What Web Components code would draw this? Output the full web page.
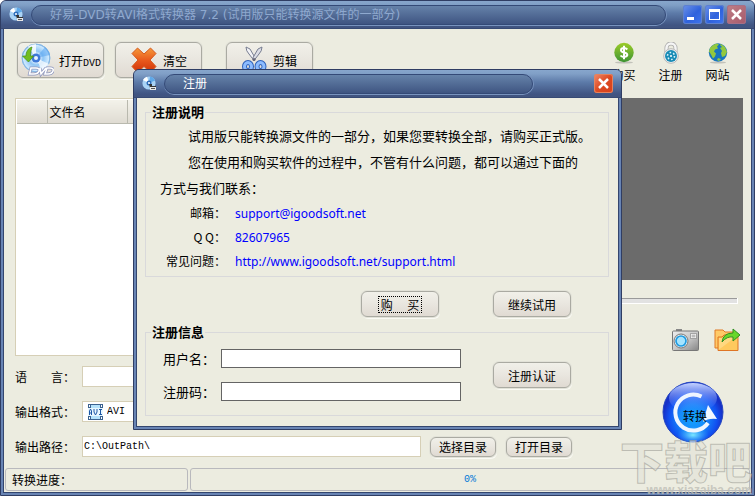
<!DOCTYPE html>
<html lang="zh-CN">
<head>
<meta charset="utf-8">
<title>好易-DVD转AVI格式转换器 7.2</title>
<style>
    body {
        margin: 0;
        background: #fff;
        color: #000;
        font-family: "Noto Sans CJK SC", sans-serif;
        font-size: 12px;
    }
</style>
</head>
<body>
<dvd-converter></dvd-converter>

<script>
const ICONS = {
    disc: `<svg width="16" height="16" viewBox="0 0 16 16">
        <circle cx="7" cy="7" r="6.6" fill="#a9d3f5"/>
        <path d="M7 7L1 4A6.6 6.6 0 0 1 5 .8z" fill="#fff"/><path d="M7 7l6.2-2.5A6.6 6.6 0 0 0 8 .5z" fill="#5fa8e8"/>
        <circle cx="7" cy="7" r="2.5" fill="#2c6cb8"/><circle cx="7" cy="7" r="1.1" fill="#eef6ff"/>
        <path d="M7 8h3v2h4v2H8z" fill="#333"/><path d="M8 11h6v3H8z" fill="#e8e8e8"/><path d="M9 12h4v1H9z" fill="#555"/>
    </svg>`,
    dvd: `<svg width="34" height="34" viewBox="0 0 34 34">
        <defs><radialGradient id="d"><stop offset=".2" stop-color="#fff"/><stop offset=".5" stop-color="#8fc5f5"/><stop offset=".9" stop-color="#cde9ff"/><stop offset="1" stop-color="#6ba7e0"/></radialGradient></defs>
        <circle cx="16" cy="15" r="14" fill="url(#d)" stroke="#85b7e4"/>
        <path d="M16 15L8 3.5A14 14 0 0 1 16 1z" fill="#fff" opacity=".8"/><path d="M16 15l13 6a14 14 0 0 1-7 7z" fill="#fff" opacity=".7"/>
        <path d="M16 15L25 4a14 14 0 0 1 5 8z" fill="#4f9ff0" opacity=".5"/>
        <circle cx="16" cy="15" r="4.5" fill="#3d78d8"/><circle cx="16" cy="15" r="2" fill="#e9f4ff"/>
        <path d="M12 4C8 5 6 9 6 13H2.500l6 6 5-6h-3c0-4 1-7 1.500-9z" fill="#72bd20" stroke="#448c13" stroke-width=".7"/>
        <g fill="none" stroke="#8c95bd" stroke-width="3"><path d="M11 25h5q4 0 3 3-1 3-5 3h-4.500zM20 25l1 6 5-6M27 25h3q4 0 3 3-1 3-5 3h-3z"/></g>
        <g fill="none" stroke="#fff" stroke-width="1.600"><path d="M11 25h5q4 0 3 3-1 3-5 3h-4.500zM20 25l1 6 5-6M27 25h3q4 0 3 3-1 3-5 3h-3z"/></g>
    </svg>`,
    clear: `<svg width="28" height="28" viewBox="0 0 28 28">
        <defs><linearGradient id="c" x2="0" y2="1"><stop stop-color="#f59a3a"/><stop offset=".5" stop-color="#e9591c"/><stop offset="1" stop-color="#cf3208"/></linearGradient></defs>
        <path d="M7.500 2l6.500 6 6.500-6L26 7.500 20 14l6 6.500-5.500 6L14 20.500 7.500 26.500 2 20.500 8 14 2 7.500z" fill="url(#c)" stroke="#d5581d" stroke-linejoin="round"/>
    </svg>`,
    cut: `<svg width="26" height="28" viewBox="0 0 26 28">
        <path d="M4 1q0 4 3 7l5 6.500 1.500-2L8 3z" fill="#f2f2f6" stroke="#777d90"/><path d="M20 1q0 4-3 7l-5 6.500-1.500-2L16 3z" fill="#dcdde6" stroke="#777d90"/>
        <circle cx="12" cy="13.500" r="1.500" fill="#667"/>
        <g fill="none"><g stroke="#2f62ba" stroke-width="5"><ellipse cx="6" cy="20.500" rx="3.500" ry="4"/><ellipse cx="18.500" cy="20.500" rx="3.500" ry="4"/></g><g stroke="#8dbcff" stroke-width="3"><ellipse cx="6" cy="20.500" rx="3.500" ry="4"/><ellipse cx="18.500" cy="20.500" rx="3.500" ry="4"/></g></g>
    </svg>`,
    buy: `<svg width="22" height="22" viewBox="0 0 22 22">
        <defs><linearGradient id="b" x2="0" y2="1"><stop stop-color="#9ccc28"/><stop offset="1" stop-color="#3d9434"/></linearGradient></defs>
        <ellipse cx="11" cy="20.500" rx="9" ry="1" fill="#c2c2ba"/><circle cx="11" cy="10.500" r="9.700" fill="url(#b)"/>
        <path d="M14.300 7.500Q13 6 11 6 8 6 8 8.200c0 3 6.300 1.400 6.300 4.600 0 2.200-5 3-6.800.7M11 3.800v13.500" fill="none" stroke="#fff" stroke-width="2"/>
    </svg>`,
    lock: `<svg width="22" height="22" viewBox="0 0 22 22">
        <path d="M6.500 12V6a4.500 4.500 0 0 1 9 0v6" fill="none" stroke="#aaa" stroke-width="4"/><path d="M6.500 12V6a4.500 4.500 0 0 1 9 0v6" fill="none" stroke="#f5f5f5" stroke-width="2.500"/>
        <circle cx="11" cy="14" r="7.300" fill="#f2f2f2" stroke="#b9b9b9"/><circle cx="11" cy="14" r="6" fill="#188bb5"/>
        <circle cx="11" cy="14" r="3.500" fill="none" stroke="#d6f2fb" stroke-width="1.600" stroke-dasharray="1.600 2.065"/><circle cx="11" cy="14" r="1" fill="#fff"/>
    </svg>`,
    web: `<svg width="22" height="22" viewBox="0 0 22 22">
        <ellipse cx="11" cy="20.500" rx="8" ry="1" fill="#c2c2ba"/><circle cx="11" cy="10.500" r="9.200" fill="#1876bf"/>
        <path d="M3 6q3-4 7-4.500l2 1-2 2 1 2-3 1-1 2 2 2-1 3-2 2-2-4-2-3zM14 2l4 3 2 5-2 4-3 1-1-4 1-2-2-3 2-1-2-2zM11 16l3 1-2 2-2-1z" fill="#92c93e"/>
    </svg>`,
    camera: `<svg width="28" height="24" viewBox="0 0 28 24">
        <defs><linearGradient id="k" x2="1" y2="1"><stop stop-color="#eee"/><stop offset=".5" stop-color="#c9c9c9"/><stop offset="1" stop-color="#858585"/></linearGradient></defs>
        <path d="M4 1h6v3H4z" fill="#888"/><rect x=".5" y="3" width="26" height="19.500" rx="1" fill="url(#k)" stroke="#777"/>
        <rect x="19" y="6" width="5" height="4" fill="#bbb" stroke="#fff"/><path d="M18.500 5.500h6v5h-6z" fill="none" stroke="#777" stroke-width=".6"/>
        <circle cx="9" cy="13" r="7" fill="#f4f4f4" stroke="#777"/><circle cx="9" cy="13" r="5" fill="#a5e4ff" stroke="#209be0" stroke-width="1.700"/>
    </svg>`,
    folder: `<svg width="28" height="24" viewBox="0 0 28 24">
        <path d="M1 20V2h8l2 2h9v16z" fill="#ffca68" stroke="#e07b26"/><path d="M4 22.500V9h4l2-2h14v15.500z" fill="#ffc95e" stroke="#df7524"/>
        <path d="M5 21.500V10h4l2-2h12z" fill="#ffe29a" opacity=".6"/>
        <path d="M8 14q1-9 11-9V1l7 6-7 6V9q-6-1-11 5z" fill="#68d72a" stroke="#2f8f21" stroke-linejoin="round"/>
    </svg>`,
    avi: `<svg width="15" height="16" viewBox="0 0 15 16">
        <path d="M0 0h15v16H0z" fill="#3b6290"/><path d="M3 1h9v14H3z" fill="#b5e2fb"/>
        <path d="M1 1h1v2H1zM13 1h1v2h-1zM1 13h1v2H1zM13 13h1v2h-1z" fill="#fff"/><path d="M0 4h15v8H0z" fill="#e8f7ff"/>
        <path d="M1.500 11V7l1-2 1 2v4M1.500 9h2M6 5v3l1.500 3L9 8V5M11 5.500h3M12.500 5.500v5M11 10.500h3" fill="none" stroke="#1d57a6"/>
    </svg>`,
    convert: `<svg width="62" height="62" viewBox="0 0 62 62">
        <defs><radialGradient id="o" cy=".6"><stop stop-color="#12a4ff"/><stop offset=".45" stop-color="#1689fa"/><stop offset=".8" stop-color="#1150f0"/><stop offset="1" stop-color="#1630c8"/></radialGradient>
        <linearGradient id="g" x2="0" y2="1"><stop stop-color="#c3d2ff"/><stop offset="1" stop-color="#4274ff" stop-opacity="0"/></linearGradient>
        <radialGradient id="h"><stop stop-color="#7ce8ff"/><stop offset="1" stop-color="#36a9ff" stop-opacity="0"/></radialGradient></defs>
        <circle cx="31" cy="31" r="30" fill="url(#o)" stroke="#2445bf"/><ellipse cx="31" cy="17" rx="24" ry="15" fill="url(#g)"/>
        <ellipse cx="31" cy="54" rx="16" ry="9" fill="url(#h)"/>
        <path d="M39.500 15.500A18 18 0 1 0 46 42" fill="none" stroke="#eef5ff" stroke-width="4"/>
        <path d="M46 24l9 14q-9-1-14 3z" fill="#f2f7ff"/>
    </svg>`,
    minimize: `<svg width="19" height="19"><path d="M4 12h7v3H4z" fill="#fff"/></svg>`,
    maximize: `<svg width="19" height="19"><path d="M4 4h11v11H4zM5 7v7h9V7z" fill="#fff" fill-rule="evenodd"/></svg>`,
    close: `<svg width="19" height="19"><path d="M5 5l9 9M14 5l-9 9" stroke="#fff" stroke-width="2.500"/></svg>`
};

// Frame with a blue title bar, shared by the main window and the dialog
class SkinWindow extends HTMLElement {
    constructor() {
        super();
        this.attachShadow({ mode: 'open' });
    }

    connectedCallback() {
        const caption = this.getAttribute('caption') || '';
        const controls = (this.getAttribute('controls') || 'close').split(' ');
        const names = { minimize: '最小化', maximize: '最大化', close: '关闭' };

        this.shadowRoot.innerHTML = `
            <style>
                :host {
                    display: flex;
                    flex-direction: column;
                    box-sizing: border-box;
                    border: 1px solid #2f3d63;
                    border-radius: 6px 6px 0 0;
                    background: #6884b4;
                }
                header {
                    display: flex;
                    align-items: center;
                    box-sizing: border-box;
                    height: 28px;
                    padding: 0 8px;
                    border-radius: 5px 5px 0 0;
                    border-bottom: 1px solid #374a74;
                    background: linear-gradient(#87a6cc 0, #809fc6 4px, #5d7ba9 12px, #405583 24px, #41547f);
                }
                .title {
                    flex: 1;
                    box-sizing: border-box;
                    height: 20px;
                    margin: 0 var(--title-gap, 17px) 0 6px;
                    padding-left: 18px;
                    border: 1px solid #344a77;
                    border-radius: 10px;
                    box-shadow: 0 1px 0 #7893be, 1px 0 0 #7893be;
                    background: linear-gradient(#6582a9, #3f5582);
                    color: var(--title-color, #8fa9cf);
                    font: 12px/19px "DejaVu Sans", "Noto Sans CJK SC", sans-serif;
                    white-space: nowrap;
                    overflow: hidden;
                }
                .controls { display: flex; gap: 3px; }
                button {
                    width: 19px;
                    height: 19px;
                    padding: 0;
                    border: 0;
                    border-radius: 3px;
                    background: linear-gradient(135deg, #6d92e8, #2f62dc 55%, #3f75ee);
                    box-shadow: inset 0 0 0 1px #5d80cf;
                }
                button.close {
                    background: var(--close-bg, linear-gradient(135deg, #c08087, #a5596b));
                    box-shadow: inset 0 0 0 1px var(--close-edge, #a66f86);
                }
                svg { display: block; }
                main {
                    flex: 1;
                    display: flex;
                    flex-direction: column;
                    margin: 0 2px 2px;
                    border: solid #34466f;
                    border-width: 0 1px 1px;
                    background: #ecece0;
                }
            </style>
            <header>
                ${ICONS.disc}
                <div class="title">${caption}</div>
                <div class="controls">
                    ${controls.map(c => `<button class="${c}" aria-label="${names[c]}">${ICONS[c]}</button>`).join('')}
                </div>
            </header>
            <main><slot></slot></main>
        `;
    }
}

class SkinButton extends HTMLElement {
    constructor() {
        super();
        this.attachShadow({ mode: 'open' });
        const icon = this.getAttribute('icon');
        this.shadowRoot.innerHTML = `
            <style>
                :host { display: block; width: 78px; height: 26px; }
                button {
                    display: flex;
                    align-items: center;
                    justify-content: center;
                    gap: 5px;
                    box-sizing: border-box;
                    width: 100%;
                    height: 100%;
                    padding: 0;
                    border: 1px solid #aaaaa2;
                    border-radius: 6px;
                    background: linear-gradient(#f1f0e9, #e9e6df 50%, #e0dad2);
                    box-shadow: 0 0 0 1px #e2e2d8, 1px 2px 0 #fafaf4;
                    color: #000;
                    font: inherit;
                    white-space: pre;
                }
                :host([focused]) span { outline: 1px dotted #000; padding: 0 2px; line-height: 15px; }
            </style>
            <button>${icon ? ICONS[icon] : ''}<span><slot></slot></span></button>
        `;
    }
}

class QuickLink extends HTMLElement {
    constructor() {
        super();
        this.attachShadow({ mode: 'open' });
        this.shadowRoot.innerHTML = `
            <style>
                :host { display: block; width: 47px; }
                button {
                    display: flex;
                    flex-direction: column;
                    align-items: center;
                    gap: 3px;
                    width: 100%;
                    padding: 0;
                    border: 0;
                    background: none;
                    color: #000;
                    font: inherit;
                    line-height: 16px;
                }
            </style>
            <button>${ICONS[this.getAttribute('icon')]}<span><slot></slot></span></button>
        `;
    }
}

class FileList extends HTMLElement {
    constructor() {
        super();
        this.attachShadow({ mode: 'open' });
        this.shadowRoot.innerHTML = `
            <style>
                :host { display: block; border: 1px solid #d6cfb6; padding: 1px; background: #fff; }
                table { width: 100%; border-collapse: collapse; table-layout: fixed; }
                th {
                    height: 23px;
                    box-sizing: border-box;
                    padding: 0 2px;
                    border: solid #b9b9ae;
                    border-width: 0 1px 1px 0;
                    background: linear-gradient(#f3f2ea, #dfdbd2);
                    font-weight: normal;
                    text-align: left;
                }
            </style>
            <table>
                <colgroup><col style="width: 30px"><col style="width: 80px"><col></colgroup>
                <thead><tr><th></th><th>文件名</th><th></th></tr></thead>
            </table>
        `;
    }
}

class PreviewPane extends HTMLElement {
    constructor() {
        super();
        this.attachShadow({ mode: 'open' });
        this.shadowRoot.innerHTML = `
            <style>
                :host { display: flex; flex-direction: column; }
                .screen { flex: 1; background: #6b6b6b; }
                input {
                    appearance: none;
                    box-sizing: border-box;
                    height: 6px;
                    margin: 18px 5px 24px 0;
                    border: solid #fff;
                    border-width: 0 1px 1px 0;
                    background: #e2e2e2;
                    box-shadow: inset 0 1px 0 #9a9a9a;
                }
                input::-webkit-slider-thumb { appearance: none; width: 8px; height: 6px; background: #888; }
                .tools { display: flex; justify-content: flex-end; gap: 14px; padding: 0 1px 4px; }
                .tools button { padding: 0; border: 0; background: none; }
                svg { display: block; }
            </style>
            <div class="screen"></div>
            <input type="range" value="0" aria-label="播放进度">
            <div class="tools">
                <button aria-label="截图">${ICONS.camera}</button>
                <button aria-label="打开文件夹">${ICONS.folder}</button>
            </div>
        `;
    }
}

class OutputSettings extends HTMLElement {
    constructor() {
        super();
        this.attachShadow({ mode: 'open' });
        this.shadowRoot.innerHTML = `
            <style>
                :host { display: flex; }
                .rows { flex: 1; display: flex; flex-direction: column; gap: 14px; }
                .row { display: flex; align-items: center; height: 21px; }
                label { width: 67px; white-space: pre; }
                .field {
                    flex: 1;
                    display: flex;
                    align-items: center;
                    box-sizing: border-box;
                    height: 21px;
                    border: 1px solid #d6cfb6;
                    background: #fff;
                }
                .field svg { margin-left: 5px; }
                input, select {
                    appearance: none;
                    flex: 1;
                    min-width: 0;
                    padding: 0 1px;
                    border: 0;
                    background: none;
                    color: #000;
                    font: 10px "Liberation Mono", monospace;
                }
                svg + select { padding-left: 4px; }
                .space { width: 151px; }
                skin-button { width: 66px; height: 20px; margin-left: 9px; }
                skin-button + skin-button { margin-left: 10px; }
                .convert {
                    display: grid;
                    place-items: center;
                    align-self: flex-end;
                    margin: 0 19px 14px 90px;
                    padding: 0;
                    border: 0;
                    background: none;
                    color: #000;
                    font: inherit;
                }
                .convert > * { grid-area: 1 / 1; }
                .convert span { padding: 6px 0 0 4px; }
            </style>
            <div class="rows">
                <div class="row">
                    <label for="lang">语　　言：</label>
                    <div class="field"><select id="lang"></select></div>
                    <div class="space"></div>
                </div>
                <div class="row">
                    <label for="format">输出格式：</label>
                    <div class="field">${ICONS.avi}<select id="format"><option>AVI</option></select></div>
                    <div class="space"></div>
                </div>
                <div class="row">
                    <label for="path">输出路径：</label>
                    <div class="field"><input id="path" value="C:\\OutPath\\"></div>
                    <skin-button>选择目录</skin-button>
                    <skin-button>打开目录</skin-button>
                </div>
            </div>
            <button class="convert">${ICONS.convert}<span>转换</span></button>
        `;
    }
}

class StatusBar extends HTMLElement {
    constructor() {
        super();
        this.attachShadow({ mode: 'open' });
        this.shadowRoot.innerHTML = `
            <style>
                :host { display: flex; gap: 2px; padding: 0 1px 1px; }
                div {
                    box-sizing: border-box;
                    height: 23px;
                    border: 1px solid #b9b9bd;
                    border-radius: 3px;
                    line-height: 21px;
                }
                .label { width: 183px; padding-left: 6px; }
                .value { flex: 1; text-align: center; color: #0078d7; font-family: "Liberation Mono", monospace; font-size: 10px; }
            </style>
            <div class="label"><slot></slot></div>
            <div class="value">${this.getAttribute('value')}</div>
        `;
    }
}

class RegisterDialog extends HTMLElement {
    constructor() {
        super();
        this.attachShadow({ mode: 'open' });
        this.shadowRoot.innerHTML = `
            <style>
                :host { display: block; width: 489px; }
                skin-window {
                    --title-gap: 61px;
                    --title-color: #fff;
                    --close-bg: linear-gradient(135deg, #f08b6c, #dc4a22 50%, #d8401a);
                    --close-edge: #e4835e;
                }
                .body { padding: 7px 9px 10px 8px; font-size: 13px; }
                fieldset { margin: 0; padding: 4px 14px 3px; border: 1px solid #d9d9db; min-width: 0; }
                legend { margin-left: -9px; padding: 0 1px; font-weight: bold; line-height: 14px; }
                p { margin: 0; line-height: 26px; text-indent: 28px; white-space: nowrap; }
                dl { display: grid; grid-template-columns: 66px 1fr; grid-auto-rows: 24px; column-gap: 9px; margin: 0; line-height: 24px; }
                dt { text-align: right; font-size: 12px; }
                dd { display: flex; margin: 0; }
                a { color: #00f; text-decoration: none; font: 12px/25px "Noto Sans", sans-serif; }
                .actions { display: flex; justify-content: flex-end; gap: 54px; padding: 14px 38px 8px; }
                skin-button { font-size: 12px; }
                .account { padding: 10px 37px 14px 17px; }
                .account legend { margin-left: -12px; }
                .fields { display: flex; align-items: center; justify-content: space-between; }
                .grid { display: grid; grid-template-columns: 58px 240px; row-gap: 14px; }
                label { line-height: 19px; }
                input { box-sizing: border-box; height: 19px; padding: 0 3px; border: 1px solid #646464; background: #fff; }
            </style>
            <skin-window caption="注册">
                <div class="body">
                    <fieldset>
                        <legend>注册说明</legend>
                        <p>试用版只能转换源文件的一部分，如果您要转换全部，请购买正式版。</p>
                        <p>您在使用和购买软件的过程中，不管有什么问题，都可以通过下面的<br>方式与我们联系：</p>
                        <dl>
                            <dt>邮箱：</dt><dd><a href="mailto:support@igoodsoft.net">support@igoodsoft.net</a></dd>
                            <dt>Q Q：</dt><dd><a href="#">82607965</a></dd>
                            <dt>常见问题：</dt><dd><a href="http://www.igoodsoft.net/support.html">http://www.igoodsoft.net/support.html</a></dd>
                        </dl>
                    </fieldset>
                    <div class="actions">
                        <skin-button focused>购　 买</skin-button>
                        <skin-button>继续试用</skin-button>
                    </div>
                    <fieldset class="account">
                        <legend>注册信息</legend>
                        <div class="fields">
                            <div class="grid">
                                <label for="user">用户名：</label><input id="user">
                                <label for="code">注册码：</label><input id="code">
                            </div>
                            <skin-button>注册认证</skin-button>
                        </div>
                    </fieldset>
                </div>
            </skin-window>
        `;
    }
}

class SiteMark extends HTMLElement {
    constructor() {
        super();
        this.attachShadow({ mode: 'open' });
        this.shadowRoot.innerHTML = `
            <style>
                :host { display: block; text-align: right; pointer-events: none; color: rgba(226, 226, 216, .6); font-weight: 900; }
                .name { font-size: 44px; line-height: 50px; -webkit-text-stroke: 1px rgba(150, 150, 142, .55); }
                .site { font: bold 12px/11px "Liberation Sans", sans-serif; color: rgba(190, 190, 182, .8); }
            </style>
            <div class="name">下载吧</div>
            <div class="site">www.xiazaiba.com</div>
        `;
    }
}

class DvdConverter extends HTMLElement {
    constructor() {
        super();
        this.attachShadow({ mode: 'open' });
        this.shadowRoot.innerHTML = `
            <style>
                :host { display: block; position: relative; overflow: hidden; }
                .main { min-height: 100vh; }
                .toolbar { display: flex; gap: 11px; padding: 13px 10px 0 13px; height: 41px; }
                .toolbar skin-button { width: 87px; height: 36px; }
                .toolbar .wide { margin-left: 13px; }
                .mono { font: 10px "Liberation Mono", monospace; }
                .links { display: flex; margin-left: auto; }
                .work { flex: 1; display: grid; grid-template-columns: 1fr 240px; gap: 10px; padding: 15px 8px 0 11px; }
                output-settings { padding: 10px 8px 11px 11px; }
                .overlay { position: absolute; inset: 3px 0 0; display: grid; place-items: center; }
                site-mark { position: absolute; right: 3px; bottom: 0; }
            </style>
            <skin-window class="main" caption="好易-DVD转AVI格式转换器 7.2 (试用版只能转换源文件的一部分)" controls="minimize maximize close">
                <div class="toolbar">
                    <skin-button icon="dvd">打开<span class="mono">DVD</span></skin-button>
                    <skin-button icon="clear">清空</skin-button>
                    <skin-button class="wide" icon="cut">剪辑</skin-button>
                    <div class="links">
                        <quick-link icon="buy">购买</quick-link>
                        <quick-link icon="lock">注册</quick-link>
                        <quick-link icon="web">网站</quick-link>
                    </div>
                </div>
                <div class="work">
                    <file-list></file-list>
                    <preview-pane></preview-pane>
                </div>
                <output-settings></output-settings>
                <status-bar value="0%">转换进度：</status-bar>
            </skin-window>
            <site-mark></site-mark>
            <div class="overlay"><register-dialog></register-dialog></div>
        `;
    }
}

customElements.define('skin-window', SkinWindow);
customElements.define('skin-button', SkinButton);
customElements.define('quick-link', QuickLink);
customElements.define('file-list', FileList);
customElements.define('preview-pane', PreviewPane);
customElements.define('output-settings', OutputSettings);
customElements.define('status-bar', StatusBar);
customElements.define('register-dialog', RegisterDialog);
customElements.define('site-mark', SiteMark);
customElements.define('dvd-converter', DvdConverter);
</script>
</body>
</html>
